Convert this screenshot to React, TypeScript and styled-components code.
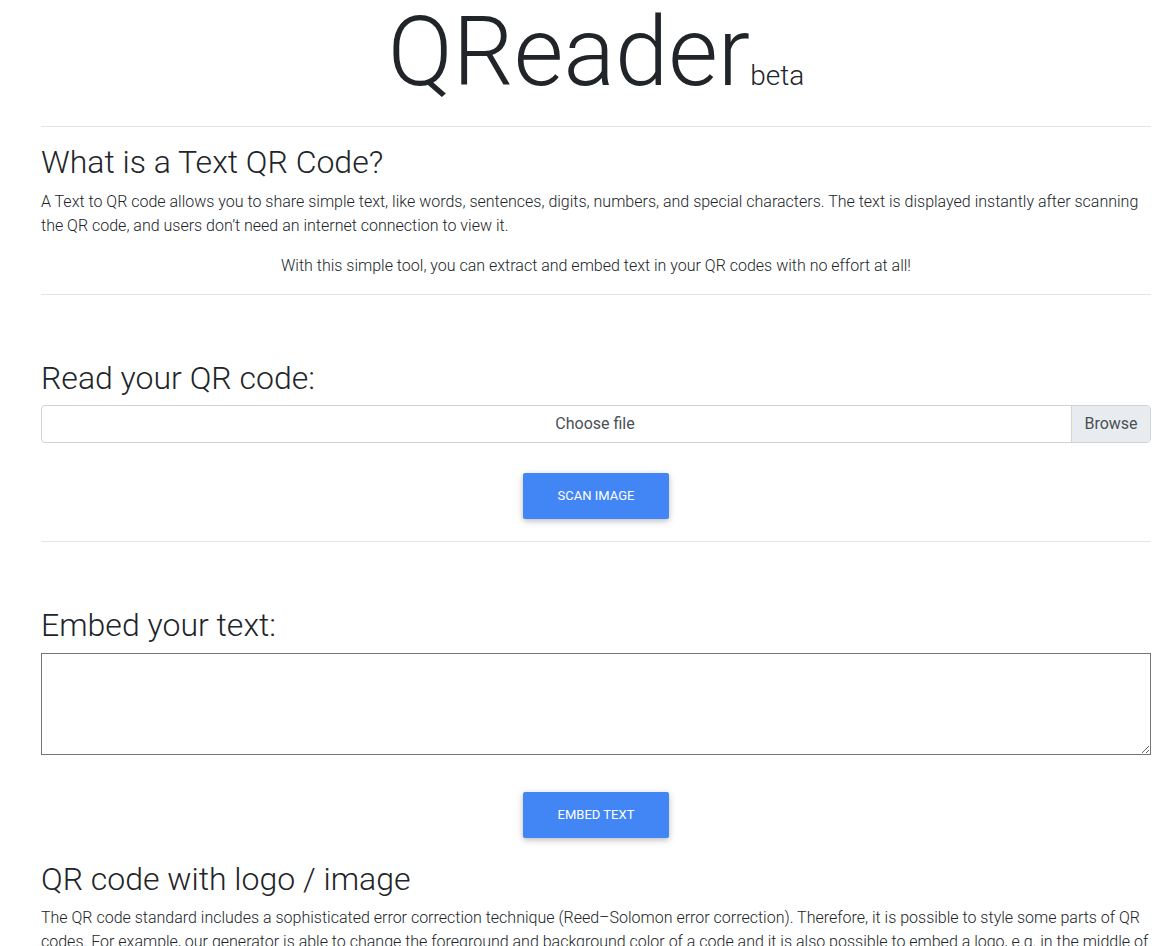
import React from "react";
import styled, { createGlobalStyle } from "styled-components";

const Global = createGlobalStyle`
  html, body { margin: 0; padding: 0; background: #fff; }
  body {
    font-family: Roboto, "Liberation Sans", sans-serif;
    font-weight: 300;
    font-size: 16px;
    line-height: 1.5;
    color: #212529;
  }
  *, *::before, *::after { box-sizing: border-box; }
`;

const Page = styled.div`
  padding: 0 20px 0 41px;
`;

const Title = styled.h1`
  margin: -5px 0 0;
  font-size: 96px;
  font-weight: 300;
  line-height: 1.2;
  text-align: center;
  color: #212529;
`;

const Beta = styled.small`
  font-size: 28px;
  font-weight: 300;
`;

const Rule = styled.hr`
  margin: 16px 0;
  border: 0;
  border-top: 1px solid rgba(0, 0, 0, 0.1);
`;

const Section = styled.section<{ $top?: number }>`
  padding-top: ${(p) => p.$top ?? 0}px;
`;

const Heading = styled.h2`
  margin: 0 0 8px;
  font-size: 32px;
  font-weight: 300;
  line-height: 1.2;
  color: #212529;
`;

const Para = styled.p<{ $center?: boolean }>`
  margin: 0 0 16px;
  text-align: ${(p) => (p.$center ? "center" : "left")};
`;

const FileBox = styled.label`
  display: flex;
  height: 38px;
  border: 1px solid #ced4da;
  border-radius: 4px;
  overflow: hidden;
  font-weight: 400;
  color: #495057;
  cursor: pointer;
`;

const FileName = styled.span`
  flex: 1;
  display: flex;
  align-items: center;
  justify-content: center;
  padding-left: 77px;
`;

const Browse = styled.span`
  width: 79px;
  display: flex;
  align-items: center;
  justify-content: center;
  background: #e9ecef;
  border-left: 1px solid #ced4da;
`;

const ButtonRow = styled.div<{ $top: number }>`
  display: flex;
  justify-content: center;
  margin-top: ${(p) => p.$top}px;
`;

const Button = styled.button`
  margin: 6px;
  padding: 13.4px 34.2px;
  border: 0;
  border-radius: 2px;
  background: #4285f4;
  color: #fff;
  font-family: Roboto, "Liberation Sans", sans-serif;
  font-weight: 400;
  font-size: 13px;
  line-height: 1.5;
  text-transform: uppercase;
  box-shadow: 0 2px 5px 0 rgba(0, 0, 0, 0.16), 0 2px 10px 0 rgba(0, 0, 0, 0.12);
  cursor: pointer;
`;

const TextArea = styled.textarea`
  display: block;
  width: 100%;
  height: 102px;
  border: 1px solid #767676;
  border-radius: 0;
  margin: 0;
  font-family: "Liberation Mono", monospace;
  font-size: 13px;
`;

export default function App() {
  return (
    <>
      <Global />
      <Page>
        <Title>
          QReader<Beta>beta</Beta>
        </Title>
        <Rule />
        <Heading>What is a Text QR Code?</Heading>
        <Para>
          A Text to QR code allows you to share simple text, like words, sentences, digits,
          numbers, and special characters. The text is displayed instantly after scanning the QR
          code, and users don’t need an internet connection to view it.
        </Para>
        <Para $center>
          With this simple tool, you can extract and embed text in your QR codes with no effort at
          all!
        </Para>
        <Rule />
        <Section $top={48}>
          <Heading>Read your QR code:</Heading>
          <FileBox>
            <FileName>Choose file</FileName>
            <Browse>Browse</Browse>
          </FileBox>
          <ButtonRow $top={24}>
            <Button>Scan image</Button>
          </ButtonRow>
        </Section>
        <Rule />
        <Section $top={48}>
          <Heading>Embed your text:</Heading>
          <TextArea />
          <ButtonRow $top={31}>
            <Button>Embed text</Button>
          </ButtonRow>
        </Section>
        <Section $top={16}>
          <Heading>QR code with logo / image</Heading>
          <Para>
            The QR code standard includes a sophisticated error correction technique (Reed–Solomon
            error correction). Therefore, it is possible to style some parts of QR codes. For
            example, our generator is able to change the foreground and background color of a
            code and it is also possible to embed a logo, e.g. in the middle of the QR code,
            without losing the ability to scan it.
          </Para>
        </Section>
      </Page>
    </>
  );
}
